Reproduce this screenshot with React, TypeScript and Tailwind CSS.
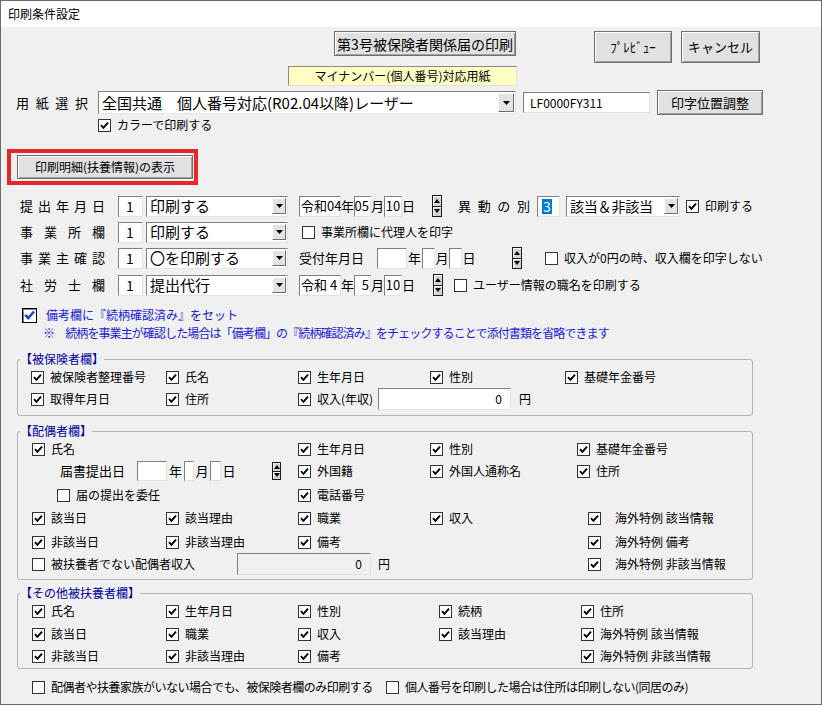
import React from 'react';

// Windows-classic style print settings dialog

const Box: React.FC<{ on?: boolean }> = ({ on = true }) => (
    <span className="w-[13px] h-[13px] shrink-0 border border-[#333] bg-white flex items-center justify-center">
        {on && (
            <svg width="9" height="9" viewBox="0 0 9 9">
                <path d="M1 4.2 L3.4 6.8 L8 1.6" fill="none" stroke="#000" strokeWidth="1.9" />
            </svg>
        )}
    </span>
);

const Check: React.FC<{ label: string; on?: boolean; className?: string; wide?: boolean }> = ({ label, on = true, className = '', wide }) => (
    <div className={`flex items-center shrink-0 whitespace-nowrap ${wide ? 'gap-[14px]' : 'gap-[6px]'} ${className}`}>
        <Box on={on} />
        <span>{label}</span>
    </div>
);

const Spin: React.FC<{ className?: string; small?: boolean }> = ({ className = '', small }) => (
    <div className={`flex flex-col shrink-0 border border-[#1a1a1a] bg-[#d4d4d4] ${small ? 'w-[9px] h-[18px]' : 'w-[10px] h-[22px]'} ${className}`}>
        <div className="flex-1 flex items-center justify-center border-b border-[#1a1a1a] shadow-[inset_1px_1px_0_#fff]">
            <svg width="6" height="4" viewBox="0 0 6 4"><path d="M0 4 L3 0 L6 4Z" fill="#000" /></svg>
        </div>
        <div className="flex-1 flex items-center justify-center shadow-[inset_1px_1px_0_#fff]">
            <svg width="6" height="4" viewBox="0 0 6 4"><path d="M0 0 L3 4 L6 0Z" fill="#000" /></svg>
        </div>
    </div>
);

const Field: React.FC<{ className?: string; children?: React.ReactNode }> = ({ className = '', children }) => (
    <div className={`shrink-0 flex items-center whitespace-nowrap border border-[#7f7f7f] border-r-[#e3e3e3] border-b-[#e3e3e3] ${className}`}>
        {children}
    </div>
);

const Combo: React.FC<{ text: string; className?: string; big?: boolean }> = ({ text, className = '', big }) => (
    <div className={`shrink-0 flex items-center bg-white border border-[#7f7f7f] border-r-[#e3e3e3] border-b-[#e3e3e3] pl-[3px] pr-[1px] ${className}`}>
        <span className="flex-1 whitespace-nowrap">{text}</span>
        <span className={`${big ? 'w-[16px] h-[19px]' : 'w-[14px] h-[16px]'} shrink-0 flex items-center justify-center bg-[#e3e3e3] border border-white border-r-[#6e6e6e] border-b-[#6e6e6e]`}>
            <svg width="7" height="4" viewBox="0 0 7 4"><path d="M0 0 L7 0 L3.5 4Z" fill="#000" /></svg>
        </span>
    </div>
);

const Btn: React.FC<{ className?: string; children: React.ReactNode }> = ({ className = '', children }) => (
    <div className={`shrink-0 flex items-center justify-center whitespace-nowrap bg-[#e1e1e1] border border-[#6f6f6f] shadow-[inset_1px_1px_0_#fff,inset_-1px_-1px_0_#a0a0a0] ${className}`}>
        {children}
    </div>
);

const Spread: React.FC<{ text: string; className?: string }> = ({ text, className = '' }) => (
    <div className={`shrink-0 flex justify-between ${className}`}>
        {Array.from(text).map((c, i) => <span key={i}>{c}</span>)}
    </div>
);

const DateBoxes: React.FC<{ era: string; m: string; d: string; className?: string }> = ({ era, m, d, className = '' }) => (
    <div className={`flex items-center shrink-0 text-[13px] ${className}`}>
        <Field className="w-[42px] h-[21px] bg-white pl-[1px]">{era}</Field>
        <span className="w-[13px] text-center">年</span>
        <Field className="w-[17px] h-[21px] bg-white justify-end pr-[1px]">{m}</Field>
        <span className="w-[13px] text-center">月</span>
        <Field className="w-[18px] h-[21px] bg-white justify-center">{d}</Field>
        <span className="w-[13px] text-center">日</span>
    </div>
);

const Legend: React.FC<{ text: string }> = ({ text }) => (
    <legend className="ml-[2px] text-[12px] leading-[14px] text-[#0000a0]">{text}</legend>
);

const Row: React.FC<{ className?: string; children: React.ReactNode }> = ({ className = '', children }) => (
    <div className={`flex items-center h-[22px] ${className}`}>{children}</div>
);

const App: React.FC = () => {
    return (
        <div className="w-[824px] h-[705px] bg-white text-black text-[12px] leading-[16px] font-['Noto_Sans_CJK_JP','Noto_Sans',sans-serif]">
            <div className="w-[822px] h-[705px] border border-[#6b6b6b] bg-[#f0f0f0] flex flex-col overflow-hidden">
                {/* title bar */}
                <div className="h-[26px] shrink-0 bg-white flex items-center pl-[7px] leading-[14px]">印刷条件設定</div>

                {/* top buttons */}
                <div className="mt-[4px] flex items-start h-[32px]">
                    <Btn className="ml-[333px] w-[182px] h-[25px] text-[14px]">第3号被保険者関係届の印刷</Btn>
                    <Btn className="ml-[78px] w-[78px] h-[32px] text-[13px]">ﾌﾟﾚﾋﾞｭｰ</Btn>
                    <Btn className="ml-[9px] w-[79px] h-[32px] text-[13px]">キャンセル</Btn>
                </div>
                <div className="mt-[3px] ml-[287px] w-[229px] h-[20px] flex items-center justify-center bg-[#ffffc4] border border-[#8a8a8a] border-r-[#e0e0e0] border-b-[#e0e0e0]">
                    マイナンバー(個人番号)対応用紙
                </div>

                {/* paper select */}
                <div className="mt-[4px] flex items-center h-[25px]">
                    <Spread text="用紙選択" className="ml-[15px] w-[72px] text-[13px]" />
                    <Combo big text="全国共通　個人番号対応(R02.04以降)レーザー" className="ml-[10px] w-[418px] h-[23px] text-[15px]" />
                    <Field className="ml-[7px] w-[127px] h-[21px] bg-white pl-[6px]">LF0000FY311</Field>
                    <Btn className="ml-[7px] w-[106px] h-[25px] text-[13px]">印字位置調整</Btn>
                </div>
                <div className="mt-[3px] h-[14px] flex items-center">
                    <Check label="カラーで印刷する" className="ml-[97px]" />
                </div>

                {/* highlighted detail button */}
                <div className="mt-[17px] ml-[6px] w-[191px] h-[36px] border-4 border-[#e8262c] pl-[6px] pt-[2px]">
                    <Btn className="w-[176px] h-[24px]">印刷明細(扶養情報)の表示</Btn>
                </div>

                {/* print rows */}
                <Row className="mt-[10px]">
                    <Spread text="提出年月日" className="ml-[19px] w-[85px] text-[13px]" />
                    <Field className="ml-[13px] w-[25px] h-[21px] bg-white pl-[7px] text-[14px]">1</Field>
                    <Combo text="印刷する" className="ml-[3px] w-[142px] h-[21px] text-[15px]" />
                    <DateBoxes era="令和04" m="05" d="10" className="ml-[11px]" />
                    <Spin className="ml-[17px]" />
                    <Spread text="異動の別" className="ml-[16px] w-[72px] text-[13px]" />
                    <Field className="ml-[7px] w-[23px] h-[21px] bg-white pl-[4px] text-[14px] border-[#6a6a6a]">
                        <span className="bg-[#0078d7] text-white leading-[15px] px-[1px]">3</span>
                    </Field>
                    <Combo text="該当＆非該当" className="ml-[6px] w-[114px] h-[21px] text-[14px] tracking-[-0.2px]" />
                    <Check label="印刷する" className="ml-[6px]" />
                </Row>
                <Row className="mt-[4px]">
                    <Spread text="事業所欄" className="ml-[19px] w-[85px] text-[13px]" />
                    <Field className="ml-[13px] w-[25px] h-[21px] bg-white pl-[7px] text-[14px]">1</Field>
                    <Combo text="印刷する" className="ml-[3px] w-[142px] h-[21px] text-[15px]" />
                    <Check label="事業所欄に代理人を印字" on={false} className="ml-[14px]" />
                </Row>
                <Row className="mt-[4px]">
                    <Spread text="事業主確認" className="ml-[19px] w-[85px] text-[13px]" />
                    <Field className="ml-[13px] w-[25px] h-[21px] bg-white pl-[7px] text-[14px]">1</Field>
                    <Combo text="〇を印刷する" className="ml-[3px] w-[142px] h-[21px] text-[15px]" />
                    <span className="ml-[11px] w-[67px] shrink-0 text-[13px]">受付年月日</span>
                    <div className="flex items-center text-[13px]">
                        <Field className="ml-[11px] w-[30px] h-[21px] bg-white" />
                        <span className="w-[15px] text-center">年</span>
                        <Field className="w-[13px] h-[21px] bg-white" />
                        <span className="w-[14px] text-center">月</span>
                        <Field className="w-[13px] h-[21px] bg-white" />
                        <span className="w-[14px] text-center">日</span>
                    </div>
                    <Spin className="ml-[36px]" />
                    <Check label="収入が0円の時、収入欄を印字しない" on={false} className="ml-[23px]" />
                </Row>
                <Row className="mt-[5px]">
                    <Spread text="社労士欄" className="ml-[19px] w-[85px] text-[13px]" />
                    <Field className="ml-[13px] w-[25px] h-[21px] bg-white pl-[7px] text-[14px]">1</Field>
                    <Combo text="提出代行" className="ml-[3px] w-[142px] h-[21px] text-[15px]" />
                    <DateBoxes era="令和 4" m="5" d="10" className="ml-[11px]" />
                    <Spin className="ml-[18px]" />
                    <Check label="ユーザー情報の職名を印刷する" on={false} className="ml-[11px]" />
                </Row>

                {/* relationship confirmed */}
                <div className="mt-[11px] h-[16px] flex items-center ml-[21px] gap-[9px] text-[#1a1ad6]">
                    <span className="w-[15px] h-[15px] shrink-0 bg-white border border-black shadow-[inset_1px_1px_0_#808080] flex items-center justify-center">
                        <svg width="11" height="10" viewBox="0 0 11 10">
                            <path d="M1.2 4.8 L4.2 8 L10 1.5" fill="none" stroke="#1646d6" strokeWidth="2.6" />
                        </svg>
                    </span>
                    <span>備考欄に『続柄確認済み』をセット</span>
                </div>
                <div className="mt-[2px] h-[16px] ml-[42px] whitespace-nowrap text-[#1a1ad6] tracking-[-0.9px]">
                    ※　続柄を事業主が確認した場合は「備考欄」の『続柄確認済み』をチェックすることで添付書類を省略できます
                </div>

                {/* insured */}
                <fieldset className="mt-[11px] ml-[16px] w-[736px] border border-[#b4b4b4] rounded-[3px] pb-[5px]">
                    <Legend text="【被保険者欄】" />
                    <Row className="pl-[13px]">
                        <Check label="被保険者整理番号" className="w-[135px]" />
                        <Check label="氏名" className="w-[132px]" />
                        <Check label="生年月日" className="w-[132px]" />
                        <Check label="性別" className="w-[135px]" />
                        <Check label="基礎年金番号" />
                    </Row>
                    <Row className="pl-[13px]">
                        <Check label="取得年月日" className="w-[135px]" />
                        <Check label="住所" className="w-[132px]" />
                        <Check label="収入(年収)" className="w-[80px]" />
                        <Field className="w-[133px] h-[22px] bg-white justify-end pr-[8px]">0</Field>
                        <span className="ml-[8px]">円</span>
                    </Row>
                </fieldset>

                {/* spouse */}
                <fieldset className="mt-[8px] ml-[16px] w-[736px] border border-[#b4b4b4] rounded-[3px] pb-[4px]">
                    <Legend text="【配偶者欄】" />
                    <Row className="pl-[14px]">
                        <Check label="氏名" className="w-[266px]" />
                        <Check label="生年月日" className="w-[132px]" />
                        <Check label="性別" className="w-[147px]" />
                        <Check label="基礎年金番号" />
                    </Row>
                    <Row className="pl-[14px]">
                        <div className="w-[266px] shrink-0 flex items-center pl-[28px] text-[13px]">
                            <span className="w-[77px] shrink-0">届書提出日</span>
                            <Field className="w-[30px] h-[20px] bg-white" />
                            <span className="w-[17px] text-center">年</span>
                            <Field className="w-[10px] h-[20px] bg-white" />
                            <span className="w-[16px] text-center">月</span>
                            <Field className="w-[11px] h-[20px] bg-white" />
                            <span className="w-[16px] text-center">日</span>
                            <Spin small className="ml-[35px]" />
                        </div>
                        <Check label="外国籍" className="w-[132px]" />
                        <Check label="外国人通称名" className="w-[147px]" />
                        <Check label="住所" />
                    </Row>
                    <Row className="pl-[14px] mt-[2px]">
                        <div className="w-[266px] shrink-0 pl-[25px]">
                            <Check label="届の提出を委任" on={false} />
                        </div>
                        <Check label="電話番号" />
                    </Row>
                    <Row className="pl-[14px] mt-[1px]">
                        <Check label="該当日" className="w-[134px]" />
                        <Check label="該当理由" className="w-[132px]" />
                        <Check label="職業" className="w-[132px]" />
                        <Check label="収入" className="w-[158px]" />
                        <Check label="海外特例 該当情報" wide />
                    </Row>
                    <Row className="pl-[14px] mt-[2px]">
                        <Check label="非該当日" className="w-[134px]" />
                        <Check label="非該当理由" className="w-[132px]" />
                        <Check label="備考" className="w-[290px]" />
                        <Check label="海外特例 備考" wide />
                    </Row>
                    <Row className="pl-[14px]">
                        <Check label="被扶養者でない配偶者収入" on={false} className="w-[205px]" />
                        <Field className="w-[134px] h-[22px] bg-[#f0f0f0] justify-end pr-[8px]">0</Field>
                        <span className="w-[217px] shrink-0 pl-[7px]">円</span>
                        <Check label="海外特例 非該当情報" wide />
                    </Row>
                </fieldset>

                {/* other dependents */}
                <fieldset className="mt-[6px] ml-[16px] w-[736px] border border-[#b4b4b4] rounded-[3px] pb-[1px]">
                    <Legend text="【その他被扶養者欄】" />
                    <Row className="pl-[14px]">
                        <Check label="氏名" className="w-[134px]" />
                        <Check label="生年月日" className="w-[132px]" />
                        <Check label="性別" className="w-[141px]" />
                        <Check label="続柄" className="w-[142px]" />
                        <Check label="住所" />
                    </Row>
                    <Row className="pl-[14px] mt-[1px]">
                        <Check label="該当日" className="w-[134px]" />
                        <Check label="職業" className="w-[132px]" />
                        <Check label="収入" className="w-[141px]" />
                        <Check label="該当理由" className="w-[142px]" />
                        <Check label="海外特例 該当情報" />
                    </Row>
                    <Row className="pl-[14px]">
                        <Check label="非該当日" className="w-[134px]" />
                        <Check label="非該当理由" className="w-[132px]" />
                        <Check label="備考" className="w-[283px]" />
                        <Check label="海外特例 非該当情報" />
                    </Row>
                </fieldset>

                {/* bottom options */}
                <div className="mt-[11px] h-[14px] flex items-center ml-[31px]">
                    <Check label="配偶者や扶養家族がいない場合でも、被保険者欄のみ印刷する" on={false} className="w-[354px] tracking-[-0.5px]" />
                    <Check label="個人番号を印刷した場合は住所は印刷しない(同居のみ)" on={false} className="tracking-[-0.5px]" />
                </div>
            </div>
        </div>
    );
};

export default App;
